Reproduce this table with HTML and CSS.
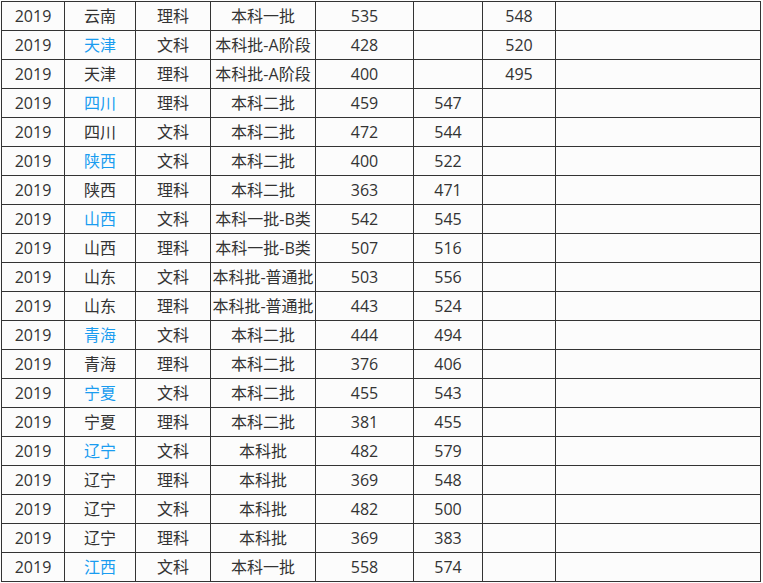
FILE: index.html
```html
<!DOCTYPE html>
<html lang="zh-CN">
<head>
<meta charset="utf-8">
<title>录取分数</title>
<link rel="stylesheet" href="styles.css">
</head>
<body>
<table class="score-table">
  <colgroup>
    <col class="c-year"><col class="c-prov"><col class="c-type"><col class="c-batch"><col class="c-line"><col class="c-a"><col class="c-b"><col class="c-rest">
  </colgroup>
  <tbody>
    <tr><td>2019</td><td>云南</td><td>理科</td><td>本科一批</td><td>535</td><td></td><td>548</td><td></td></tr>
    <tr><td>2019</td><td class="link">天津</td><td>文科</td><td>本科批-A阶段</td><td>428</td><td></td><td>520</td><td></td></tr>
    <tr><td>2019</td><td>天津</td><td>理科</td><td>本科批-A阶段</td><td>400</td><td></td><td>495</td><td></td></tr>
    <tr><td>2019</td><td class="link">四川</td><td>理科</td><td>本科二批</td><td>459</td><td>547</td><td></td><td></td></tr>
    <tr><td>2019</td><td>四川</td><td>文科</td><td>本科二批</td><td>472</td><td>544</td><td></td><td></td></tr>
    <tr><td>2019</td><td class="link">陕西</td><td>文科</td><td>本科二批</td><td>400</td><td>522</td><td></td><td></td></tr>
    <tr><td>2019</td><td>陕西</td><td>理科</td><td>本科二批</td><td>363</td><td>471</td><td></td><td></td></tr>
    <tr><td>2019</td><td class="link">山西</td><td>文科</td><td>本科一批-B类</td><td>542</td><td>545</td><td></td><td></td></tr>
    <tr><td>2019</td><td>山西</td><td>理科</td><td>本科一批-B类</td><td>507</td><td>516</td><td></td><td></td></tr>
    <tr><td>2019</td><td>山东</td><td>文科</td><td>本科批-普通批</td><td>503</td><td>556</td><td></td><td></td></tr>
    <tr><td>2019</td><td>山东</td><td>理科</td><td>本科批-普通批</td><td>443</td><td>524</td><td></td><td></td></tr>
    <tr><td>2019</td><td class="link">青海</td><td>文科</td><td>本科二批</td><td>444</td><td>494</td><td></td><td></td></tr>
    <tr><td>2019</td><td>青海</td><td>理科</td><td>本科二批</td><td>376</td><td>406</td><td></td><td></td></tr>
    <tr><td>2019</td><td class="link">宁夏</td><td>文科</td><td>本科二批</td><td>455</td><td>543</td><td></td><td></td></tr>
    <tr><td>2019</td><td>宁夏</td><td>理科</td><td>本科二批</td><td>381</td><td>455</td><td></td><td></td></tr>
    <tr><td>2019</td><td class="link">辽宁</td><td>文科</td><td>本科批</td><td>482</td><td>579</td><td></td><td></td></tr>
    <tr><td>2019</td><td>辽宁</td><td>理科</td><td>本科批</td><td>369</td><td>548</td><td></td><td></td></tr>
    <tr><td>2019</td><td>辽宁</td><td>文科</td><td>本科批</td><td>482</td><td>500</td><td></td><td></td></tr>
    <tr><td>2019</td><td>辽宁</td><td>理科</td><td>本科批</td><td>369</td><td>383</td><td></td><td></td></tr>
    <tr><td>2019</td><td class="link">江西</td><td>文科</td><td>本科一批</td><td>558</td><td>574</td><td></td><td></td></tr>
  </tbody>
</table>
</body>
</html>
```

FILE: styles.css
```css
html, body {
  margin: 0;
  padding: 0;
  background: #fcfcfc;
}

body {
  padding: 1px 0 0 1px;
  font-family: "Open Sans", "Noto Sans CJK SC", sans-serif;
  font-size: 16px;
  color: #333333;
}

.score-table {
  border-collapse: collapse;
  table-layout: fixed;
  width: 760px;
}

.score-table td {
  border: 1px solid #333333;
  height: 28px;
  padding: 0;
  text-align: center;
  vertical-align: middle;
  white-space: nowrap;
  line-height: 20px;
}

.c-year { width: 63px; }
.c-prov { width: 71px; }
.c-type { width: 75px; }
.c-batch { width: 105px; }
.c-line { width: 98px; }
.c-a { width: 69px; }
.c-b { width: 73px; }
.c-rest { width: auto; }

.score-table td.link {
  color: #1a9cf0;
}
```
